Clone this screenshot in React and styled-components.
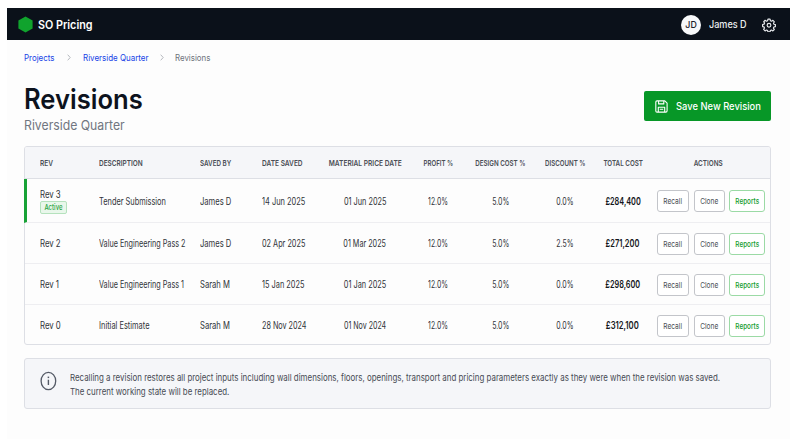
import React from 'react';
import styled, { createGlobalStyle, css } from 'styled-components';

const REVISIONS = [
    {
        rev: 'Rev 3',
        active: true,
        description: ['Tender Submission', 0.712],
        savedBy: ['James D', 0.73],
        saved: ['14 Jun 2025', 0.715],
        material: ['01 Jun 2025', 0.705],
        discount: '0.0%',
        total: ['£284,400', 0.705]
    },
    {
        rev: 'Rev 2',
        description: ['Value Engineering Pass 2', 0.695],
        savedBy: ['James D', 0.73],
        saved: ['02 Apr 2025', 0.702],
        material: ['01 Mar 2025', 0.695],
        discount: '2.5%',
        total: ['£271,200', 0.72]
    },
    {
        rev: 'Rev 1',
        description: ['Value Engineering Pass 1', 0.695],
        savedBy: ['Sarah M', 0.735],
        saved: ['15 Jan 2025', 0.71],
        material: ['01 Jan 2025', 0.705],
        discount: '0.0%',
        total: ['£298,600', 0.705]
    },
    {
        rev: 'Rev 0',
        description: ['Initial Estimate', 0.715],
        savedBy: ['Sarah M', 0.735],
        saved: ['28 Nov 2024', 0.695],
        material: ['01 Nov 2024', 0.68],
        discount: '0.0%',
        total: ['£312,100', 0.74]
    }
];

const COLUMNS = [
    ['REV', 0.82],
    ['DESCRIPTION', 0.81],
    ['SAVED BY', 0.785],
    ['DATE SAVED', 0.82],
    ['MATERIAL PRICE DATE', 0.825, true],
    ['PROFIT %', 0.765, true],
    ['DESIGN COST %', 0.775, true],
    ['DISCOUNT %', 0.77, true],
    ['TOTAL COST', 0.785, true],
    ['ACTIONS', 0.8, true]
];

const GearIcon = () => (
    <svg width="14" height="14" viewBox="0 0 24 24" fill="none" stroke="#e8eaed" strokeWidth="2" strokeLinejoin="round">
        <path d="M10.2 2h3.6l.6 2.7 1.9.8 2.4-1.5 2.5 2.5-1.5 2.4.8 1.9 2.5.5v3.5l-2.6.6-.8 1.9 1.5 2.4-2.5 2.4-2.4-1.4-1.9.8-.6 2.4h-3.5l-.6-2.5-1.9-.8-2.4 1.5-2.5-2.5 1.5-2.4-.8-1.9-2.5-.6v-3.5l2.6-.6.8-1.9-1.4-2.3 2.4-2.5 2.4 1.5 1.9-.8z" />
        <circle cx="12" cy="12.5" r="3.2" />
    </svg>
);

const SaveIcon = () => (
    <svg width="13" height="13" viewBox="0 0 13 13" fill="none" stroke="#fff" strokeWidth="1.1" strokeLinejoin="round">
        <path d="M2 .9h7.8l2.3 2.2v7.7a1.3 1.3 0 0 1-1.3 1.3H2A1.2 1.2 0 0 1 .8 10.9V2.1A1.2 1.2 0 0 1 2 .9z" />
        <path d="M3.6 1v2.9h5.2V1M3.3 12V7.2h6.4V12M4.8 9.3h3.4" />
    </svg>
);

const InfoIcon = () => (
    <svg width="18" height="20" viewBox="0 0 18 20" fill="none" stroke="#545a66">
        <ellipse cx="8.4" cy="10" rx="7.3" ry="8.7" strokeWidth="1.3" />
        <path d="M8.4 8.7v5.3" strokeWidth="1.4" />
        <path d="M8.4 5.6v1.5" strokeWidth="1.5" />
    </svg>
);

const Chevron = () => (
    <svg width="4" height="7" viewBox="0 0 4 7" fill="none" stroke="#a3a7ae" strokeWidth="0.8">
        <path d="M.7.7l2.5 2.8L.7 6.3" />
    </svg>
);

const Actions = () => (
    <ActionList>
        <Button $width={32}><Text $scale={0.805}>Recall</Text></Button>
        <Button $width={31}><Text $scale={0.805}>Clone</Text></Button>
        <Button $width={36} $green><Text $scale={0.78}>Reports</Text></Button>
    </ActionList>
);

export default () => (
    <>
        <GlobalStyle />
        <Page>
            <TopBar>
                <svg width="15" height="17" viewBox="0 0 15 17">
                    <path d="M7.5.4l7.1 4v8.1l-7.1 4.1-7.1-4.1V4.4z" fill="#10a32d" />
                </svg>
                <Brand><Text $scale={0.945} $left>SO Pricing</Text></Brand>
                <User>
                    <Avatar><Text $scale={0.94}>JD</Text></Avatar>
                    <UserName><Text $scale={0.925} $left>James D</Text></UserName>
                    <GearIcon />
                </User>
            </TopBar>
            <Content>
                <Breadcrumbs>
                    <Crumb $width={43}><Text $scale={0.88} $left>Projects</Text></Crumb>
                    <Chevron />
                    <Crumb $width={77} $gap={11.5}><Text $scale={0.885} $left>Riverside Quarter</Text></Crumb>
                    <Chevron />
                    <Crumb $gap={11} $current><Text $scale={0.875} $left>Revisions</Text></Crumb>
                </Breadcrumbs>
                <Heading>
                    <div>
                        <Title><Text $scale={0.92} $left>Revisions</Text></Title>
                        <Subtitle><Text $scale={0.942} $left>Riverside Quarter</Text></Subtitle>
                    </div>
                    <SaveButton>
                        <SaveIcon />
                        <Text $scale={0.92} $left>Save New Revision</Text>
                    </SaveButton>
                </Heading>
                <Table>
                    <HeaderRow>
                        {COLUMNS.map(([label, scale, center]) => (
                            <Cell key={label} $center={center}>
                                <Text $scale={scale} $left={!center}>{label}</Text>
                            </Cell>
                        ))}
                    </HeaderRow>
                    {REVISIONS.map(({ rev, active, description, savedBy, saved, material, discount, total }) => (
                        <Row key={rev} $active={active}>
                            <RevCell>
                                <Text $scale={0.75} $left>{rev}</Text>
                                {active && <Badge><Text $scale={0.79}>Active</Text></Badge>}
                            </RevCell>
                            {[description, savedBy, saved].map(([label, scale]) => (
                                <Cell key={label}><Text $scale={scale} $left>{label}</Text></Cell>
                            ))}
                            <Cell $center><Text $scale={material[1]}>{material[0]}</Text></Cell>
                            <Cell $center><Text $scale={0.66}>12.0%</Text></Cell>
                            <Cell $center><Text $scale={0.67}>5.0%</Text></Cell>
                            <Cell $center><Text $scale={0.67}>{discount}</Text></Cell>
                            <TotalCell $center><Text $scale={total[1]}>{total[0]}</Text></TotalCell>
                            <Actions />
                        </Row>
                    ))}
                </Table>
                <Note>
                    <InfoIcon />
                    <NoteText>
                        <Text $scale={0.8435} $left>
                            Recalling a revision restores all project inputs including wall dimensions, floors, openings,
                            transport and pricing parameters exactly as they were when the revision was saved.
                        </Text>
                        <Text $scale={0.842} $left>The current working state will be replaced.</Text>
                    </NoteText>
                </Note>
            </Content>
        </Page>
    </>
);

const GlobalStyle = createGlobalStyle`
    * {
        box-sizing: border-box;
    }

    body {
        margin: 0;
        background: #fff;
        font-family: Inter, 'Liberation Sans', sans-serif;
        overflow: hidden;
    }

    svg {
        flex: none;
    }
`;

/* condensed lettering */
const Text = styled.span`
    display: block;
    flex: none;
    white-space: nowrap;
    transform: scaleX(${({ $scale }) => $scale});
    transform-origin: ${({ $left }) => ($left ? 'left' : 'center')} center;
`;

const Page = styled.div`
    width: 783px;
    height: 431px;
    margin: 8px 0 0 7px;
    background: #fdfdfd;
    overflow: hidden;
`;

const TopBar = styled.header`
    height: 32px;
    padding: 1px 14px 0 11px;
    display: flex;
    align-items: center;
    background: #0b111a;
    color: #fff;
`;

const Brand = styled.div`
    margin-left: 5px;
    font-size: 11.4px;
    font-weight: 600;
`;

const User = styled.div`
    margin-left: auto;
    display: flex;
    align-items: center;
`;

const Avatar = styled.div`
    width: 20px;
    height: 20px;
    border-radius: 50%;
    display: flex;
    align-items: center;
    justify-content: center;
    background: #f8f9fa;
    color: #1a202a;
    font-size: 9.4px;
    font-weight: 500;
`;

const UserName = styled.div`
    width: 53px;
    margin-left: 8px;
    font-size: 9.8px;
    font-weight: 500;
    color: #eceef0;
`;

const Content = styled.main`
    padding: 0 19px 0 17px;
`;

const Breadcrumbs = styled.nav`
    height: 34px;
    display: flex;
    align-items: center;
    font-size: 9px;
`;

const Crumb = styled.div`
    width: ${({ $width }) => ($width ? `${$width}px` : 'auto')};
    margin-left: ${({ $gap = 0 }) => $gap}px;
    color: ${({ $current }) => ($current ? '#6c717b' : '#153fe6')};
`;

const Heading = styled.div`
    height: 72px;
    padding-top: 9px;
    display: flex;
    justify-content: space-between;
`;

const Title = styled.h1`
    margin: 0;
    font-size: 27.8px;
    line-height: 32px;
    font-weight: 600;
    color: #0d131d;
`;

const Subtitle = styled.div`
    font-size: 13px;
    line-height: 21px;
    color: #717680;
`;

const SaveButton = styled.button`
    width: 127px;
    height: 30px;
    margin-top: 8px;
    padding: 0 0 0 11px;
    display: flex;
    align-items: center;
    gap: 8px;
    border: 0;
    border-radius: 2px;
    background: #079727;
    color: #fff;
    font: 500 10.2px Inter, sans-serif;
`;

const Table = styled.div`
    border: 1px solid #dddfe5;
    border-radius: 3px;
`;

const columns = css`
    display: grid;
    grid-template-columns: 59px 101px 62px 62px 82px 64px 61px 68px 47.5px 1fr;
    align-items: center;
    padding: 1px 0 0 15px;
`;

const HeaderRow = styled.div`
    ${columns}
    height: 32px;
    border-bottom: 1px solid #dddfe5;
    border-radius: 2px 2px 0 0;
    background: #f5f6f9;
    font-size: 8px;
    font-weight: 600;
    color: #4a4e56;
`;

const Row = styled.div`
    ${columns}
    height: 41px;
    border-bottom: 1px solid #eeeef1;
    font-size: 10.4px;
    color: #2f3237;

    ${({ $active }) => $active && css`
        height: 44px;
        margin-left: -1px;
        padding-left: 13px;
        border-left: 3px solid #18a236;
    `}

    &:last-child {
        height: 39px;
        padding-top: 2px;
        border-bottom: 0;
    }
`;

const Cell = styled.div`
    display: flex;
    min-width: 0;
    justify-content: ${({ $center }) => ($center ? 'center' : 'flex-start')};
`;

const TotalCell = styled(Cell)`
    font-weight: 600;
    color: #14171b;
`;

const RevCell = styled.div`
    line-height: 13px;
`;

const Badge = styled.div`
    width: 27px;
    height: 13px;
    display: flex;
    align-items: center;
    justify-content: center;
    border: 1px solid #b5e2bd;
    border-radius: 2px;
    background: #e9f7eb;
    color: #2aa443;
    font-size: 7.6px;
    font-weight: 500;
`;

const ActionList = styled.div`
    display: flex;
    padding-left: 10.5px;
    gap: 4.5px;
`;

const Button = styled.button`
    width: ${({ $width }) => $width}px;
    height: 22px;
    padding: 0;
    display: flex;
    align-items: center;
    justify-content: center;
    border: 1px solid ${({ $green }) => ($green ? '#9bdaa5' : '#c3c5ca')};
    border-radius: 3px;
    background: #fff;
    color: ${({ $green }) => ($green ? '#129b2c' : '#484c53')};
    font: ${({ $green }) => ($green ? 500 : 400)} 8.2px Inter, sans-serif;
`;

const Note = styled.div`
    height: 51px;
    margin-top: 13px;
    padding: 11.5px 0 0 15px;
    display: flex;
    align-items: flex-start;
    gap: 12px;
    border: 1px solid #dddfe5;
    border-radius: 3px;
    background: #f5f6f9;
`;

const NoteText = styled.div`
    min-width: 0;
    font-size: 9.4px;
    line-height: 14.2px;
    color: #464a53;
`;
